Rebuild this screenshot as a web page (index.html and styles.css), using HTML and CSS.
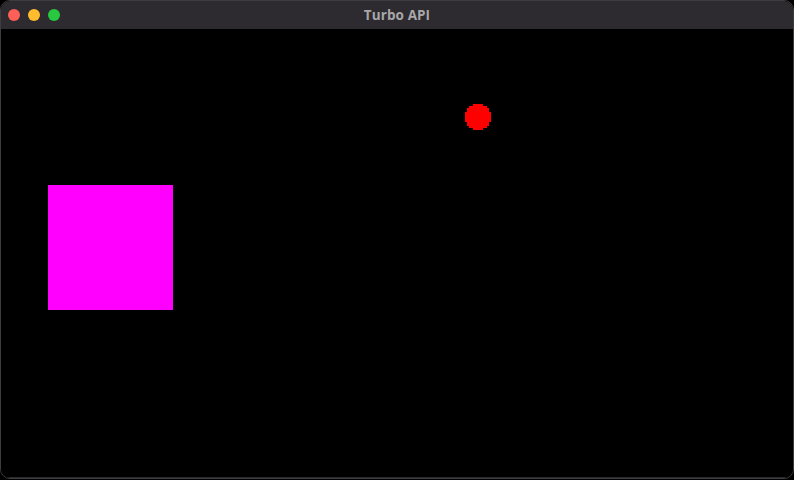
FILE: index.html
```html
<!DOCTYPE html>
<html>
<head>
<meta charset="utf-8">
<link rel="stylesheet" href="styles.css">
</head>
<body>
<div class="window">
  <div class="titlebar">
    <div class="lights">
      <span class="light red"></span>
      <span class="light yellow"></span>
      <span class="light green"></span>
    </div>
    <div class="title">Turbo API</div>
  </div>
  <div class="canvas">
    <div class="square"></div>
    <svg class="ball" width="26" height="26" viewBox="0 0 26 26" shape-rendering="crispEdges">
      <polygon fill="#ff0000" points="8,0 18,0 18,2 22,2 22,4 24,4 24,8 26,8 26,18 24,18 24,22 22,22 22,24 18,24 18,26 8,26 8,24 4,24 4,22 2,22 2,18 0,18 0,8 2,8 2,4 4,4 4,2 8,2"/>
    </svg>
  </div>
</div>
</body>
</html>
```
FILE: styles.css
```css
html, body {
  margin: 0;
  padding: 0;
  background: #000;
  width: 794px;
  height: 480px;
  overflow: hidden;
}
.window {
  width: 794px;
  height: 479px;
  box-sizing: border-box;
  border: 1px solid #3e3c40;
  border-radius: 10px;
  overflow: hidden;
  display: flex;
  flex-direction: column;
  background: #000;
}
.titlebar {
  height: 28px;
  flex: 0 0 28px;
  background: #2d2b2f;
  position: relative;
  display: flex;
  align-items: center;
  justify-content: center;
}
.lights {
  position: absolute;
  left: 7px;
  top: 8px;
  display: flex;
  gap: 8px;
}
.light {
  width: 12px;
  height: 12px;
  border-radius: 50%;
  display: block;
}
.red { background: #fe5f57; }
.yellow { background: #febc2e; }
.green { background: #28c840; }
.title {
  font-family: "Open Sans", "DejaVu Sans", sans-serif;
  font-weight: 700;
  font-size: 13.5px;
  color: #a8a7a9;
  letter-spacing: 0.1px;
}
.canvas {
  flex: 1;
  position: relative;
  background: #000;
  border-bottom: 1px solid #2a292b;
}
.square {
  position: absolute;
  left: 47px;
  top: 156px;
  width: 125px;
  height: 125px;
  background: #ff00ff;
}
.ball {
  position: absolute;
  left: 464px;
  top: 75px;
  display: block;
}
```
